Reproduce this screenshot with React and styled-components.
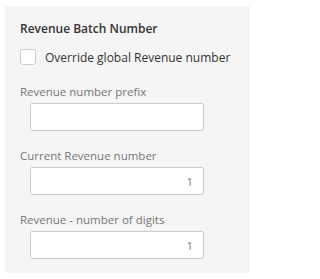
import React from 'react';
import styled, {createGlobalStyle} from 'styled-components';

const GlobalStyle = createGlobalStyle`
    body {
        margin: 0;
        background: #ffffff;
        font-family: 'Open Sans', 'Liberation Sans', sans-serif;
    }
`;

const Panel = styled.div`
    box-sizing: border-box;
    width: 245px;
    height: 267px;
    margin: 6px 0 0 5px;
    padding: 14px 15px;
    background: #f5f5f5;
    display: flex;
    flex-direction: column;
`;

const Title = styled.div`
    font-size: 12px;
    font-weight: 600;
    line-height: 18px;
    color: #333333;
`;

const CheckRow = styled.label`
    display: flex;
    align-items: center;
    gap: 9px;
    margin-top: 11px;
    height: 16px;
    font-size: 12px;
    color: #333333;
    white-space: nowrap;
    cursor: pointer;
`;

const CheckBox = styled.span`
    box-sizing: border-box;
    width: 16px;
    height: 16px;
    border: 1px solid #cccccc;
    border-radius: 3px;
    background: #ffffff;
    flex-shrink: 0;
`;

const Field = styled.div`
    display: flex;
    flex-direction: column;
    margin-top: ${props => props.first ? '19px' : '17px'};
`;

const FieldLabel = styled.div`
    font-size: 11.5px;
    line-height: 16px;
    color: #777777;
    margin-bottom: 3px;
`;

const Input = styled.input`
    box-sizing: border-box;
    width: 174px;
    height: 28px;
    margin-left: 10px;
    padding: 0 10px;
    border: 1px solid #cccccc;
    border-radius: 2px;
    background: #ffffff;
    font-family: 'Open Sans', 'Liberation Sans', sans-serif;
    font-size: 11.5px;
    color: #777777;
    text-align: ${props => props.numeric ? 'right' : 'left'};
    outline: none;
`;

function App() {
    return (
        <>
            <GlobalStyle />
            <Panel>
                <Title>Revenue Batch Number</Title>
                <CheckRow>
                    <CheckBox />
                    Override global Revenue number
                </CheckRow>
                <Field first>
                    <FieldLabel>Revenue number prefix</FieldLabel>
                    <Input type="text" defaultValue="" />
                </Field>
                <Field>
                    <FieldLabel>Current Revenue number</FieldLabel>
                    <Input type="text" numeric defaultValue="1" />
                </Field>
                <Field>
                    <FieldLabel>Revenue - number of digits</FieldLabel>
                    <Input type="text" numeric defaultValue="1" />
                </Field>
            </Panel>
        </>
    );
}

export default App;
